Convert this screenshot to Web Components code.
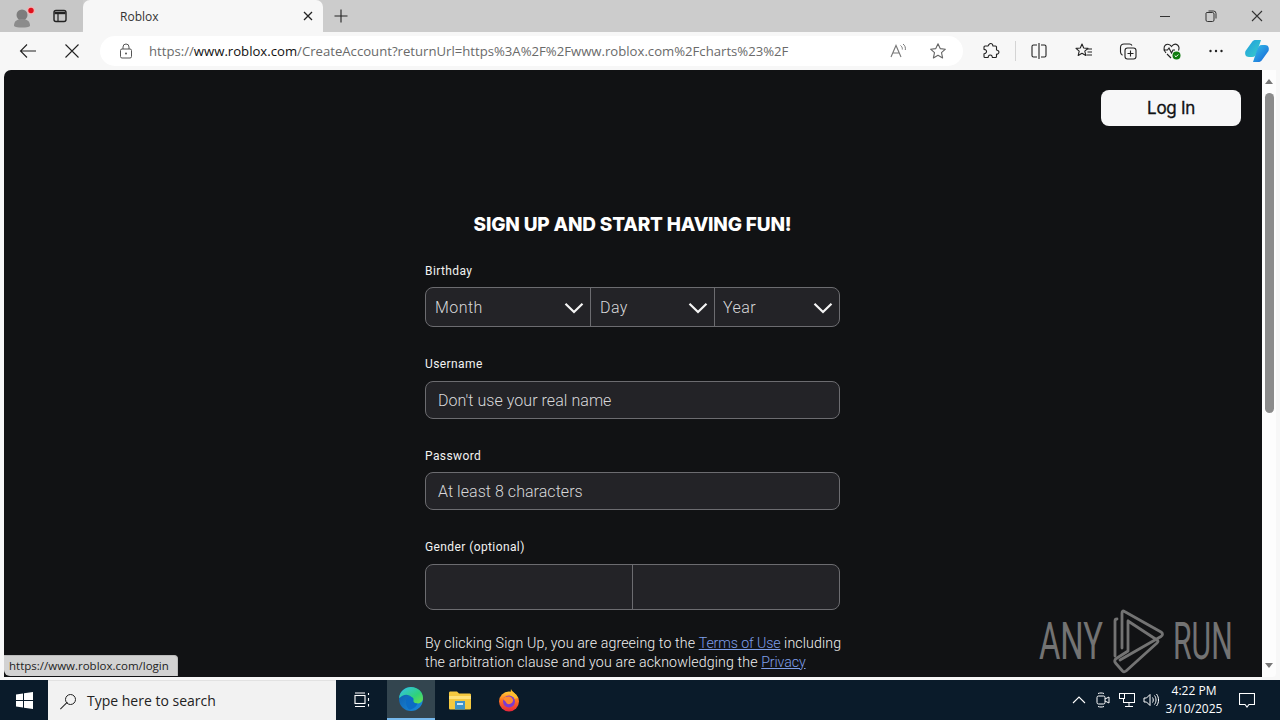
<!DOCTYPE html>
<html lang="en"><head><meta charset="utf-8"><title>Roblox</title>
<style>
html,body{margin:0;height:100%;overflow:hidden;background:#f7f7f7}
body{width:1280px;height:720px;display:flex;flex-direction:column;font-family:"Open Sans","Liberation Sans",sans-serif}
</style></head><body>
<edge-tabstrip></edge-tabstrip>
<edge-toolbar></edge-toolbar>
<edge-viewport>
  <signup-page></signup-page>
</edge-viewport>
<win-taskbar></win-taskbar>
<script>
const def=(name,html)=>customElements.define(name,class extends HTMLElement{constructor(){super();this.attachShadow({mode:'open'}).innerHTML=html}});
const S='fill="none" stroke="#222" stroke-width="1.100"';

def('edge-tabstrip',`<style>
:host{display:flex;height:32px;background:#ccc;flex:none;align-items:stretch;color:#222}
.side{width:83px;background:#c7c7c7;border-bottom-right-radius:4px;height:32px;display:flex;align-items:center;position:relative}
.prof{margin-left:9px;width:26px;height:26px;position:relative}
.tab{width:240px;background:#f7f7f7;border-radius:7px 7px 0 0;display:flex;align-items:center;box-sizing:border-box;padding-left:37px;font:12px "Open Sans",sans-serif;color:#333}
.tab span{flex:1}
.tab svg{margin-right:9px}
.plus{margin-left:10px;align-self:center}
.win{margin-left:auto;display:flex;align-items:center}
.win svg{width:46px;height:32px}
</style>
<div class="side">
<svg class="prof" viewBox="0 0 26 26"><circle cx="13" cy="12" r="5.500" fill="#7d7d7d"/><path d="M5 23c0-5 3-7 8-7s8 2 8 7c-2 2-14 2-16 0z" fill="#8c8c8c"/><circle cx="22" cy="7.500" r="4" fill="#efb3b3"/><circle cx="22" cy="7.500" r="2.700" fill="#e0101c"/></svg>
<svg width="16" height="16" viewBox="0 0 16 16" style="margin-left:17px"><rect x="2" y="2.500" width="12" height="11" rx="2" fill="none" stroke="#222" stroke-width="1.400"/><path d="M2.500 5h11" stroke="#222" stroke-width="2.400"/><path d="M6 5v8" stroke="#222" stroke-width="1.200"/></svg>
</div>
<div class="tab"><span>Roblox</span><svg width="12" height="12" viewBox="0 0 12 12"><path d="M2 2l8 8M10 2l-8 8" stroke="#222" stroke-width="1.300"/></svg></div>
<svg class="plus" width="16" height="16" viewBox="0 0 16 16"><path d="M8 1.500v13M1.500 8h13" stroke="#222" stroke-width="1.100"/></svg>
<div class="win">
<svg viewBox="0 0 46 32"><path d="M18 16.500h10" stroke="#333"/></svg>
<svg viewBox="0 0 46 32"><path d="M18.500 13.500h6a1.500 1.500 0 0 1 1.500 1.500v6a1.500 1.500 0 0 1-1.500 1.500h-5a1.500 1.500 0 0 1-1.500-1.500v-7z" transform="translate(0,-1)" fill="none" stroke="#333"/><path d="M20.500 11h5a2.500 2.500 0 0 1 2.500 2.500v5" fill="none" stroke="#333"/></svg>
<svg viewBox="0 0 46 32"><path d="M18 11l10 10M28 11l-10 10" stroke="#333" stroke-width="1.100"/></svg>
</div>`);

def('edge-toolbar',`<style>
:host{display:flex;height:38px;flex:none;background:#f7f7f7;align-items:center;position:relative}
.nav{width:100px;display:flex;flex:none;align-items:center}
.nav svg:first-child{margin-left:18px}
.nav svg:last-child{margin-left:24px}
.pill{width:863px;height:30px;background:#fff;border-radius:15px;display:flex;align-items:center;flex:none;box-sizing:border-box;padding-left:18px}
.url{margin-left:15px;font:13.150px/30px "Open Sans",sans-serif;color:#6a6a6a;white-space:nowrap;width:700px;overflow:hidden;flex:none}
.url b{font-weight:400;color:#111}
.tools{display:flex;align-items:center;flex:1}
.sep{width:1px;height:20px;background:#d4d4d4;margin:0 14px 0 15px}
</style>
<div class="nav">
<svg width="20" height="20" viewBox="0 0 20 20"><path d="M18 10H2.500M9 3.500L2.500 10 9 16.500" fill="none" stroke="#222" stroke-width="1.100"/></svg>
<svg width="20" height="20" viewBox="0 0 20 20"><path d="M3.500 3.500l13 13M16.500 3.500l-13 13" stroke="#222" stroke-width="1.100"/></svg>
</div>
<div class="pill">
<svg width="16" height="16" viewBox="0 0 16 16" style="flex:none"><rect x="2.500" y="6" width="11" height="9" rx="1.500" fill="none" stroke="#555"/><path d="M5 6V4a3 3 0 0 1 6 0v2" fill="none" stroke="#555"/><circle cx="8" cy="10.500" r="1" fill="#555"/></svg>
<div class="url">https://<b>www.roblox.com</b>/CreateAccount?returnUrl=https%3A%2F%2Fwww.roblox.com%2Fcharts%23%2F</div>
<svg width="18" height="18" viewBox="0 0 18 18" style="margin-left:40px;flex:none"><path d="M2 15L7 3.500 12 15M4 11h6" fill="none" stroke="#777" stroke-width="1.100"/><path d="M11.500 3.500c1.500 1 2 2.500 1.800 4M14 2c2 1.500 2.700 3.500 2.300 6" fill="none" stroke="#777"/></svg>
<svg width="18" height="18" viewBox="0 0 18 18" style="flex:none;margin-left:22px"><path d="M9 1.800l2.200 4.800 5.200.6-3.900 3.500 1.100 5.200L9 13.300 4.400 15.900l1.100-5.200L1.600 7.200l5.200-.6z" fill="none" stroke="#666" stroke-width="1.100" stroke-linejoin="round"/></svg>
</div>
<div class="tools">
<svg width="18" height="18" viewBox="0 0 18 18" style="margin-left:19px;flex:none"><path d="M7 2.500c1-1.300 3-1.300 3.600.2.200.6 0 1 .4 1.300h2.500c.5 0 1 .5 1 1V8c.3.400.7.200 1.300.400 1.500.6 1.500 2.600.2 3.500-.5.300-1 .1-1.500.4v2.200c0 .5-.5 1-1 1h-3c-.4-.4-.2-1-.5-1.500-.8-1.400-2.700-1.400-3.500 0-.3.500-.1 1.100-.5 1.500H3c-.5 0-1-.5-1-1v-2.700c.4-.4 1-.2 1.500-.5 1.400-.8 1.400-2.700 0-3.500C3 7.500 2.400 7.700 2 7.300V5c0-.5.500-1 1-1h2.800c.6-.3.700-1 1.200-1.500z" ${S}/></svg>
<div class="sep"></div>
<svg width="18" height="18" viewBox="0 0 18 18" style="flex:none"><path d="M7 3H3.500A1.500 1.500 0 0 0 2 4.500v9A1.500 1.500 0 0 0 3.500 15H7M11 3h3.500A1.500 1.500 0 0 1 16 4.500v9a1.500 1.500 0 0 1-1.500 1.500H11M9 1v16" ${S}/></svg>
<svg width="18" height="18" viewBox="0 0 18 18" style="margin-left:27px;flex:none"><path d="M7 2l1.700 4 4.300.4-3.200 2.800 1 4.200L7 11.200 3.200 13.400l1-4.200L1 6.400l4.300-.4z" ${S} stroke-linejoin="round"/><path d="M12 7h5M12.500 10h4.500M11.500 13H17" ${S}/></svg>
<svg width="18" height="18" viewBox="0 0 18 18" style="margin-left:26px;flex:none"><rect x="6" y="6" width="11" height="11" rx="2.500" ${S}/><path d="M11.500 8.500v6M8.500 11.500h6" ${S}/><path d="M13 3.500C12.500 2.500 11.500 2 10.500 2H5C3 2 1.500 3.500 1.500 5.500V10c0 1.500.8 2.600 2 3.200" ${S}/></svg>
<svg width="20" height="20" viewBox="0 0 20 20" style="margin-left:25px;flex:none"><path d="M4 12C1.500 9 1.500 5.500 3.500 4c2-1.500 4.500-.5 6 1.500 1.500-2 4-3 6-1.500 1.500 1.200 2 3 1 5.500" ${S}/><path d="M1.500 9h4l1.500-2 2.500 5 1.500-3h2M5 13l4 4" ${S}/><circle cx="14.500" cy="14.500" r="4" fill="#107c10"/><path d="M12.700 14.500l1.300 1.300 2.300-2.300" fill="none" stroke="#fff"/></svg>
<svg width="18" height="18" viewBox="0 0 18 18" style="margin-left:25px;flex:none"><circle cx="3.500" cy="9" r="1.200" fill="#222"/><circle cx="9" cy="9" r="1.200" fill="#222"/><circle cx="14.500" cy="9" r="1.200" fill="#222"/></svg>
<svg width="26" height="24" viewBox="0 0 26 24" style="margin-left:19px;flex:none"><defs>
<linearGradient id="c1" x1="0" y1="0" x2="1" y2="1"><stop offset="0" stop-color="#1f9be0"/><stop offset="1" stop-color="#3ad0c8"/></linearGradient>
<linearGradient id="c2" x1="0" y1="0" x2="1" y2="1"><stop offset="0" stop-color="#34c4e8"/><stop offset="1" stop-color="#1760d8"/></linearGradient></defs>
<path d="M8 3c1-1.500 2-2 4-2h5l-4 12c-1 3-2 5-5 5H5C1.500 18 .5 15 1.500 12z" fill="url(#c1)"/><path d="M18 21c-1 1.500-2 2-4 2H9l4-12c1-3 2-5 5-5h3c3.500 0 4.500 3 3.500 6z" fill="url(#c2)"/></svg>
</div>`);

def('edge-viewport',`<style>
:host{display:flex;height:608px;flex:none;padding-left:4px;position:relative;background:#f7f7f7}
.page{width:1258px;height:607px;background:#111214;border-radius:7px 0 0 0;overflow:hidden;position:relative;flex:none}
.bar{width:14px;height:607px;background:#fdfdfd;flex:none;display:flex;flex-direction:column;align-items:center;position:relative;border-radius:0 0 4px 0}
.up{margin-top:9px;width:0;height:0;border:4.500px solid transparent;border-top:0;border-bottom:5px solid #777}
.thumb{margin-top:9px;width:9px;height:320px;background:#8b8b8b;border-radius:4.500px}
.down{margin-top:auto;margin-bottom:9px;width:0;height:0;border:4.500px solid transparent;border-bottom:0;border-top:5px solid #777}
.status{position:absolute;left:0;bottom:1px;height:20px;background:#d2d2d2;border:1px solid #bbb;border-left:0;border-bottom:0;border-radius:0 4px 0 6px;font:11.500px/20px "Open Sans",sans-serif;color:#222;padding-left:5px;white-space:nowrap;width:168px}
.mark{position:absolute;left:1091px;top:534px;width:85px;height:72px;display:block;pointer-events:none}
.word{position:absolute;top:540px;font:400 52px/64px Roboto,sans-serif;color:#737373;transform-origin:0 50%;white-space:nowrap}
</style>
<div class="page"><slot></slot>
<div class="word" style="left:1035px;transform:scaleX(.63)">ANY</div>
<div class="word" style="left:1169px;transform:scaleX(.58)">RUN</div>
<svg class="mark" viewBox="0 0 85 72" fill="none" stroke="#737373" stroke-width="2.800" stroke-linejoin="round" stroke-linecap="round">
<path d="M27 44V9Q27 6 29.500 7.500L66 28Q69 30 66 32.500L25 56"/>
<path d="M33 17L62 36Q64 37 62 39L31 67Q29 68.500 27.500 67L20.500 59Q19 57 20.500 55L33 47V17"/>
<path d="M20 52V17Q20 15 22 15"/>
</svg>
<div class="status">https://www.roblox.com/login</div>
</div>
<div class="bar"><div class="up"></div><div class="thumb"></div><div class="down"></div></div>`);

def('signup-page',`<style>
:host{display:flex;flex-direction:column;height:100%;color:#fff;font-family:Roboto,"Liberation Sans",sans-serif}
header{display:flex;justify-content:flex-end;padding:20px 21px 0 0}
.login{width:140px;height:36px;background:#f7f7f8;color:#111214;border-radius:8px;font:400 17px/36px Inter,Roboto,sans-serif;letter-spacing:-.3px;text-align:center;-webkit-text-stroke:.3px #111214}
form{width:415px;align-self:center;margin:85px 1px 0 0;display:flex;flex-direction:column}
h1{margin:0 0 15px;font:800 19px/28px Inter,sans-serif;letter-spacing:-.17px;text-align:center;text-transform:uppercase;white-space:nowrap}
.terms{margin-top:24px;font:300 14.200px/19px Roboto,sans-serif;letter-spacing:.12px;color:#f0f0f0;white-space:nowrap}
a{color:#7f9fe8;text-decoration:underline;letter-spacing:-.11px}
</style>
<header><div class="login">Log In</div></header>
<form>
<h1>Sign up and start having fun!</h1>
<form-field label="Birthday" gap="8" below="7"><select-row></select-row></form-field>
<form-field label="Username" gap="28" below="8"><text-box>Don't use your real name</text-box></form-field>
<form-field label="Password" gap="28" below="7"><text-box>At least 8 characters</text-box></form-field>
<form-field label="Gender (optional)" gap="28" below="8"><gender-row></gender-row></form-field>
<div class="terms">By clicking Sign Up, you are agreeing to the <a>Terms of Use</a> including<br>the arbitration clause and you are acknowledging the <a>Privacy</a></div>
</form>`);

customElements.define('form-field',class extends HTMLElement{constructor(){super();const g=this.getAttribute('gap')||'0',b=this.getAttribute('below')||'8';this.attachShadow({mode:'open'}).innerHTML=`<style>
:host{display:block}
.l{font:400 12px/18px Roboto,sans-serif;color:#f2f2f2;letter-spacing:.4px;margin-bottom:${b}px;margin-top:${g}px}
</style><div class="l">${this.getAttribute('label')}</div><slot></slot>`}});

const chev='<svg width="20" height="12" viewBox="0 0 20 12" style="flex:none"><path d="M1.500 1.800L10 10 18.500 1.800" fill="none" stroke="#f4f4f4" stroke-width="2.200"/></svg>';
def('select-row',`<style>
:host{display:grid;grid-template-columns:165px 124px 126px;height:40px;box-sizing:border-box;background:#232327;border:1px solid #6c6c70;border-radius:8px;font:300 16px/38px Roboto,sans-serif;color:#d8d8da}
div{display:flex;align-items:center;justify-content:space-between;padding:1px 6px 0 9px;border-right:1px solid #6c6c70;letter-spacing:.45px}
div:last-child{border:0;padding:1px 8px 0 8px}
svg{margin-top:-1px}
</style><div>Month${chev}</div><div>Day${chev}</div><div>Year${chev}</div>`);
def('text-box',`<style>
:host{display:block;height:38px;box-sizing:border-box;background:#232327;border:1px solid #6c6c70;border-radius:8px;padding-left:12px;font:300 16px/38px Roboto,sans-serif;color:#d8d8da;letter-spacing:.05px}
</style><slot></slot>`);
def('gender-row',`<style>
:host{display:grid;grid-template-columns:206px 1fr;height:46px;box-sizing:border-box;background:#232327;border:1px solid #6c6c70;border-radius:8px}
div+div{border-left:1px solid #6c6c70}
</style><div></div><div></div>`);

def('win-taskbar',`<style>
:host{display:flex;height:40px;margin-top:2px;background:#0a1b2a;flex:none;align-items:stretch;color:#fff;font:12px "Open Sans",sans-serif}
.i{display:flex;align-items:center;justify-content:center;flex:none}
.search{width:288px;background:#f2f2f2;color:#222;display:flex;align-items:center;box-sizing:border-box;padding-left:11px;font-size:14px;flex:none;border-top:1px solid #e2e2e2}
.lens{flex:none;position:relative;width:18px;height:18px;margin-right:10px}
.lens::before{content:"";position:absolute;left:6px;top:2px;width:9px;height:9px;border:1.300px solid #222;border-radius:50%}
.lens::after{content:"";position:absolute;left:0;top:13.500px;width:10px;height:1.400px;background:#222;transform:rotate(-45deg)}
.edge{background:#33454f;border-bottom:2px solid #76b9ed;box-sizing:border-box}
.tray{margin-left:auto;display:flex;align-items:center}
.clock{width:64px;box-sizing:border-box;padding-right:2px;text-align:center;line-height:18px;font-size:12px}
</style>
<div class="i" style="width:48px"><svg width="17" height="17" viewBox="0 0 17 17" fill="#fff"><path d="M0 2.500L7 1.400V8H0zM8 1.300L17 0v8H8zM0 9h7v6.600L0 14.500zM8 9h9v8l-9-1.300z"/></svg></div>
<div class="search"><div class="lens"></div><span>Type here to search</span></div>
<div class="i" style="width:51px"><svg width="16" height="16" viewBox="0 0 16 16" fill="none" stroke="#fff" stroke-width="1.100"><rect x="1" y="3.500" width="10" height="8"/><path d="M1 1h10M1 14.500h10M14.500 1v2M14.500 6v3M14.500 12v2.500"/></svg></div>
<div class="i edge" style="width:48px"><svg width="26" height="26" viewBox="0 0 26 26"><defs>
<linearGradient id="e1" x1="0" y1="0" x2="1" y2="1"><stop offset="0" stop-color="#35c1f1"/><stop offset=".6" stop-color="#2fd27a"/><stop offset="1" stop-color="#6fe04a"/></linearGradient>
<linearGradient id="e2" x1="0" y1="0" x2="1" y2="1"><stop offset="0" stop-color="#0d5aa8"/><stop offset="1" stop-color="#1a8ee0"/></linearGradient></defs>
<circle cx="13" cy="13" r="12" fill="url(#e2)"/><path d="M1 12C2 5 7 1 13 1c7 0 12 5 12 11 0 4-3 5.500-6 5.500-3 0-5-1-5-1.500 1-1 1-3 0-4.500C12 9 8 8 5 9.500 3 10.500 1.500 12 1 12z" fill="url(#e1)"/><path d="M8 15c0-2.500 2-4 4.500-4 2 0 3.500 1 3 3-.5 2 1 3.500 4 3.500-1.500 3.500-4.500 6-8.500 6C8 20 8 17 8 15z" fill="#0c6cc4"/></svg></div>
<div class="i" style="width:50px"><svg width="22" height="20" viewBox="0 0 22 20"><path d="M0 3c0-1 .5-1.500 1.500-1.500H8L10 3.500h10.500c1 0 1.500.5 1.500 1.500v13c0 1-.5 1.500-1.500 1.500h-19C.5 19.500 0 19 0 18z" fill="#f5c93f"/><path d="M0 6h22v3H0z" fill="#ffe27a"/><rect x="6" y="11" width="10" height="8.500" fill="#3f93c9"/><rect x="8" y="13" width="6" height="2" fill="#cfe6f5"/></svg></div>
<div class="i" style="width:48px"><svg width="24" height="24" viewBox="0 0 24 24"><defs>
<linearGradient id="f1" x1="0" y1="0" x2="0" y2="1"><stop offset="0" stop-color="#ffcd3a"/><stop offset=".4" stop-color="#ff7a1f"/><stop offset="1" stop-color="#e8253c"/></linearGradient></defs>
<circle cx="12" cy="13.500" r="10" fill="url(#f1)"/><path d="M14 1c1 3 5 4 7 9l-5 1-3-3z" fill="#ffbd2e"/><circle cx="12" cy="13.500" r="6" fill="#7c3bd1"/><path d="M6 11c2-3 7-3 9-1s1 5-2 6c-2 .5-4-.5-4-2" fill="#ff8a2e"/></svg></div>
<div class="tray">
<div class="i" style="width:24px"><svg width="14" height="14" viewBox="0 0 14 14"><path d="M1 10l6-6 6 6" fill="none" stroke="#fff" stroke-width="1.100"/></svg></div>
<div class="i" style="width:24px"><svg width="16" height="16" viewBox="0 0 16 16" fill="none" stroke="#fff"><rect x="2" y="4" width="8" height="8" rx="1.500"/><path d="M10 7l4-2v6l-4-2M3 1.500c2-.7 4-.7 6 0M3 14.500c2 .7 4 .7 6 0"/></svg></div>
<div class="i" style="width:24px"><svg width="16" height="16" viewBox="0 0 16 16" fill="none" stroke="#fff"><rect x="4.500" y="1.500" width="11" height="9"/><rect x=".5" y="1.500" width="5" height="5" fill="#0a1b2a"/><path d="M10 10.500v3.500M6 14.500h8"/></svg></div>
<div class="i" style="width:24px"><svg width="16" height="16" viewBox="0 0 16 16" fill="none" stroke="#fff"><path d="M1 6h2.500L7 2.500v11L3.500 10H1zM9.500 5.500c1 1.500 1 3.500 0 5M11.500 3.500c2 2.500 2 6.500 0 9M13.500 2c2.700 3.500 2.700 8.500 0 12"/></svg></div>
<div class="clock">4:22 PM<br>3/10/2025</div>
<div class="i" style="width:40px"><svg width="16" height="16" viewBox="0 0 16 16" fill="none" stroke="#fff" stroke-width="1.100"><path d="M.5 1.500h15v11H10L8 15 6 12.500H.5z"/></svg></div>
<div style="width:5px;border-left:1px solid #55626e;margin-left:7px"></div>
</div>`);
</script>
</body></html>
